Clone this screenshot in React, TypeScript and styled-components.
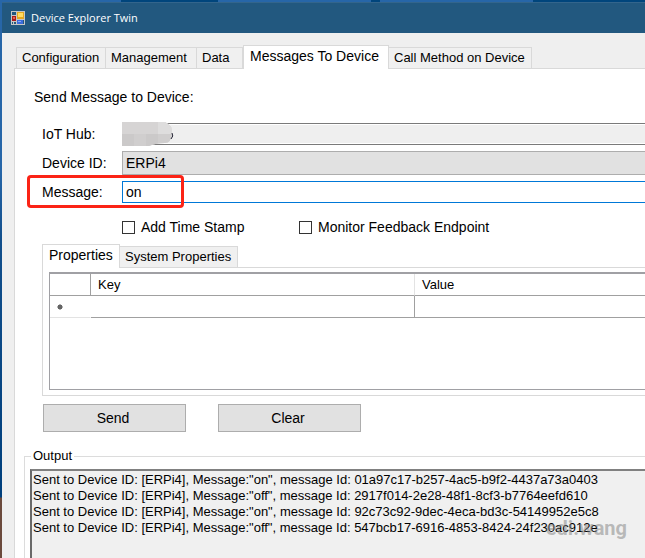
import React from "react";
import styled, { createGlobalStyle } from "styled-components";

const Global = createGlobalStyle`
  * { box-sizing: border-box; }
  body { margin: 0; overflow: hidden; }
  body, input, select, button, textarea, table {
    font-family: "Liberation Sans", Arial, sans-serif;
    font-size: 14px;
    line-height: 16px;
    color: #000;
  }
`;

const Desktop = styled.div`
  display: flex;
  min-height: 100vh;
  padding: 2px 0 0 2px;
  overflow: hidden;
  background:
    linear-gradient(90deg, #2766a8 0 121px, #00457c 121px 218px, #2766a8 218px 371px, #00457c 371px 380px, #2766a8 380px 533px, #00457c 533px) top / 100% 2px no-repeat,
    linear-gradient(#2766a8 0 170px, #124f8c 240px, #003f7c 497px, #6b4a3c 498px);
`;

const Window = styled.main`
  flex: 1;
  min-width: 0;
  display: flex;
  flex-direction: column;
  background: #efefef;
`;

const TitleBar = styled.header`
  display: flex;
  align-items: center;
  gap: 6px;
  height: 31px;
  padding-left: 9px;
  border-top: 1px solid #33658c;
  background: #22587f;
`;

const Title = styled.h1`
  margin: 0;
  font: 400 11px/16px "Open Sans", "Noto Sans", sans-serif;
  color: #fff;
`;

const TabList = styled.div<{ $inset: number; $top: number }>`
  display: flex;
  align-items: flex-end;
  padding: ${(p) => p.$top}px 0 0 ${(p) => p.$inset}px;
`;

const Tab = styled.button<{ $width: number }>`
  width: ${(p) => p.$width}px;
  height: 21px;
  padding: 0 0 0 5px;
  margin: 0;
  border: 1px solid #d9d9d9;
  border-width: 1px 1px 0 0;
  background: #f0f0f0;
  font-size: 13px;
  text-align: left;
  white-space: nowrap;
  &:first-child { border-left-width: 1px; }
  &[aria-selected="true"] {
    height: 24px;
    margin-bottom: -1px;
    padding: 0 0 3px 6px;
    border-left-width: 1px;
    background: #fff;
    font-size: 14px;
    z-index: 1;
  }
`;

const Page = styled.section`
  flex: 1;
  display: flex;
  flex-direction: column;
  margin-left: 12px;
  padding: 20px 0 0 9px;
  border: 1px solid #d9d9d9;
  border-width: 1px 0 0 1px;
  background: #fff;
`;

const Heading = styled.h2`
  margin: 0 0 17px 10px;
  font-size: 14px;
  font-weight: 400;
  line-height: 17px;
`;

const Form = styled.form`
  display: flex;
  flex-direction: column;
  gap: 6px;
  margin-left: 18px;
`;

const Field = styled.div`
  position: relative;
  display: grid;
  grid-template-columns: 80px minmax(0, 1fr);
  align-items: center;
`;

const ReadOnlyInput = styled.input`
  height: 22px;
  padding: 0 4px;
  border: 1px solid #7a7a7a;
  border-right: 0;
  background: #efefef;
  box-shadow: inset 0 1px #fff, inset 0 -1px #fff;
  outline: 0;
`;

const DeviceSelect = styled.select`
  appearance: none;
  height: 24px;
  padding: 0 3px;
  border: 1px solid #adadad;
  border-right: 0;
  border-radius: 0;
  background: #e1e1e1;
`;

const MessageInput = styled.input`
  height: 22px;
  padding: 0 3px;
  border: 1px solid #0078d7;
  border-right: 0;
  background: #fff;
  outline: 0;
`;

const Redaction = styled.svg`
  position: absolute;
  left: 80px;
  top: -1px;
`;

const Highlight = styled.div`
  position: absolute;
  left: -15px;
  top: -6px;
  width: 157px;
  height: 33px;
  border: 3px solid #fb2316;
  border-radius: 4px;
  pointer-events: none;
`;

const Options = styled.div`
  display: grid;
  grid-template-columns: 177px auto;
  justify-content: start;
  padding: 10px 0 1px 80px;
`;

const Option = styled.label`
  display: flex;
  align-items: center;
  gap: 6px;
`;

const Check = styled.input`
  appearance: none;
  width: 13px;
  height: 13px;
  margin: 0;
  border: 1px solid #333;
  background: #fff;
`;

const Properties = styled.section`
  margin: 8px 0 0 18px;
`;

const PropertiesPanel = styled.div`
  padding: 4px 0 5px 6px;
  border: 1px solid #d9d9d9;
  border-right: 0;
`;

const GridBox = styled.div`
  height: 118px;
  border: 1px solid #a0a0a4;
  border-width: 2px 0 1px 1px;
`;

const Table = styled.table`
  width: 100%;
  table-layout: fixed;
  border-collapse: separate;
  border-spacing: 0;
  th, td {
    height: 22px;
    padding: 0 7px;
    border-bottom: 1px solid #a0a0a0;
    border-right: 1px solid #a0a0a0;
    font-size: 13px;
    font-weight: 400;
    text-align: left;
  }
  th:nth-child(2) { border-right-color: #e3e3e3; }
  th:last-child, td:last-child { border-right: 0; }
  td:first-child { border-bottom-color: #e3e3e3; border-right-color: #fff; }
  svg { display: block; }
`;

const Col = styled.col<{ $width?: number }>`
  width: ${(p) => (p.$width ? `${p.$width}px` : "auto")};
`;

const Actions = styled.div`
  display: flex;
  gap: 32px;
  margin: 8px 0 0 19px;
`;

const PushButton = styled.button`
  width: 143px;
  height: 28px;
  padding: 0 3px 0 0;
  border: 1px solid #adadad;
  background: #e1e1e1;
`;

const OutputGroup = styled.fieldset`
  flex: 1;
  display: flex;
  min-width: 0;
  margin: 16px 0 0;
  padding: 5px 0 0 5px;
  border: 1px solid #dcdcdc;
  border-width: 1px 0 0 1px;
`;

const Legend = styled.legend`
  margin-left: 1px;
  padding: 0 2px;
  font-size: 13px;
`;

const OutputFrame = styled.div`
  position: relative;
  flex: 1;
  display: flex;
`;

const OutputLog = styled.textarea`
  flex: 1;
  min-width: 0;
  min-height: 80px;
  padding: 1px;
  border: solid #696969;
  border-width: 2px 0 0 2px;
  border-top-color: #808080;
  background: #f0f0f0;
  font-size: 13px;
  resize: none;
  outline: 0;
  overflow: hidden;
  white-space: pre;
`;

const Watermark = styled.span`
  position: absolute;
  right: 18px;
  top: 47px;
  font: 700 20px/24px Roboto, sans-serif;
  color: rgba(128, 128, 128, 0.5);
`;

const log = [
  'Sent to Device ID: [ERPi4], Message:"on", message Id: 01a97c17-b257-4ac5-b9f2-4437a73a0403',
  'Sent to Device ID: [ERPi4], Message:"off", message Id: 2917f014-2e28-48f1-8cf3-b7764eefd610',
  'Sent to Device ID: [ERPi4], Message:"on", message Id: 92c73c92-9dec-4eca-bd3c-54149952e5c8',
  'Sent to Device ID: [ERPi4], Message:"off", message Id: 547bcb17-6916-4853-8424-24f230ac912e',
].join("\n");

const tabs = [
  { name: "Configuration", width: 90 },
  { name: "Management", width: 91 },
  { name: "Data", width: 46 },
  { name: "Messages To Device", width: 146 },
  { name: "Call Method on Device", width: 143 },
];

const AppIcon = () => (
  <svg width="14" height="14" viewBox="0 0 14 14" shapeRendering="crispEdges" aria-hidden="true">
    <path fill="#c6c6c6" d="M0 0h14v14H0z" />
    <path fill="#22587f" d="M1 1h4v3H1zM1 11h1v2H1zM3 11h2v2H3zM12 9h1v4h-1z" />
    <path fill="#a81c1c" d="M1 5h4v5H1z" />
    <path fill="#e8604c" d="M2 6h2v2H2z" />
    <path fill="#e3a820" d="M6 1h7v7H6z" />
    <path fill="#ffdc62" d="M7 2h5v4H7z" />
    <path fill="#3c6cdc" d="M6 9h6v4H6z" />
    <path fill="#88acf6" d="M7 10h3v1H7z" />
  </svg>
);

export default function App() {
  return (
    <>
      <Global />
      <Desktop>
        <Window>
          <TitleBar>
            <AppIcon />
            <Title>Device Explorer Twin</Title>
          </TitleBar>
          <TabList role="tablist" $inset={14} $top={12}>
            {tabs.map((t) => (
              <Tab key={t.name} role="tab" aria-selected={t.name === "Messages To Device"} $width={t.width}>
                {t.name}
              </Tab>
            ))}
          </TabList>
          <Page>
            <Heading>Send Message to Device:</Heading>
            <Form>
              <Field>
                <label htmlFor="hub">IoT Hub:</label>
                <ReadOnlyInput id="hub" readOnly />
                <Redaction width="52" height="24" viewBox="0 0 52 24" aria-hidden="true">
                  <clipPath id="smudge">
                    <path d="M0 0H43Q51 3 50 12T43 21Q34 21 27 24H0Z" />
                  </clipPath>
                  <g clipPath="url(#smudge)" shapeRendering="crispEdges">
                    <path fill="#d6d4d4" d="M0 0h52v24H0z" />
                    <path fill="#cbc9c9" d="M0 12h12v12H0zM24 12h12v12H24z" />
                    <path fill="#d0cece" d="M12 12h12v12H12zM36 12h16v12H36z" />
                    <path fill="#dedddd" d="M36 0h16v12H36z" />
                  </g>
                  <path d="M50 11q2 3-1 6" fill="none" stroke="#223" />
                </Redaction>
              </Field>
              <Field>
                <label htmlFor="device">Device ID:</label>
                <DeviceSelect id="device">
                  <option>ERPi4</option>
                </DeviceSelect>
              </Field>
              <Field>
                <label htmlFor="message">Message:</label>
                <MessageInput id="message" defaultValue="on" />
                <Highlight />
              </Field>
              <Options>
                <Option>
                  <Check type="checkbox" />
                  Add Time Stamp
                </Option>
                <Option>
                  <Check type="checkbox" />
                  Monitor Feedback Endpoint
                </Option>
              </Options>
            </Form>
            <Properties>
              <TabList role="tablist" $inset={0} $top={0}>
                <Tab role="tab" aria-selected $width={78}>Properties</Tab>
                <Tab role="tab" aria-selected={false} $width={118}>System Properties</Tab>
              </TabList>
              <PropertiesPanel>
                <GridBox>
                  <Table>
                    <colgroup>
                      <Col $width={41} />
                      <Col $width={324} />
                      <Col />
                    </colgroup>
                    <thead>
                      <tr>
                        <th aria-label="Row marker" />
                        <th>Key</th>
                        <th>Value</th>
                      </tr>
                    </thead>
                    <tbody>
                      <tr>
                        <td>
                          <svg width="6" height="6" viewBox="0 0 6 6" aria-label="New row">
                            <circle cx="3" cy="3" r="2" fill="#444" />
                            <path d="M3 0v6M0 3h6M1 1l4 4M5 1L1 5" stroke="#666" />
                          </svg>
                        </td>
                        <td />
                        <td />
                      </tr>
                    </tbody>
                  </Table>
                </GridBox>
              </PropertiesPanel>
            </Properties>
            <Actions>
              <PushButton type="button">Send</PushButton>
              <PushButton type="button">Clear</PushButton>
            </Actions>
            <OutputGroup>
              <Legend>Output</Legend>
              <OutputFrame>
                <OutputLog readOnly aria-label="Output" defaultValue={log} />
                <Watermark>edi.wang</Watermark>
              </OutputFrame>
            </OutputGroup>
          </Page>
        </Window>
      </Desktop>
    </>
  );
}
